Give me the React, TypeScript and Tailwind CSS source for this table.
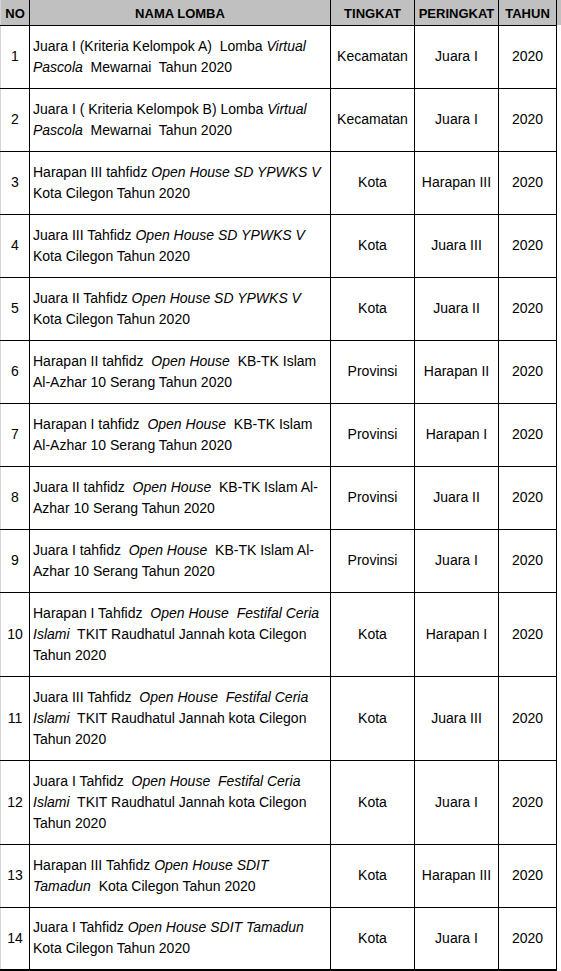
const rows: { no: number; nama: string[]; tingkat: string; peringkat: string }[] = [
  { no: 1, nama: ['Juara I (Kriteria Kelompok A)  Lomba _Virtual_', '_Pascola_  Mewarnai  Tahun 2020'], tingkat: 'Kecamatan', peringkat: 'Juara I' },
  { no: 2, nama: ['Juara I ( Kriteria Kelompok B) Lomba _Virtual_', '_Pascola_  Mewarnai  Tahun 2020'], tingkat: 'Kecamatan', peringkat: 'Juara I' },
  { no: 3, nama: ['Harapan III tahfidz _Open House SD YPWKS V_', 'Kota Cilegon Tahun 2020'], tingkat: 'Kota', peringkat: 'Harapan III' },
  { no: 4, nama: ['Juara III Tahfidz _Open House SD YPWKS V_', 'Kota Cilegon Tahun 2020'], tingkat: 'Kota', peringkat: 'Juara III' },
  { no: 5, nama: ['Juara II Tahfidz _Open House SD YPWKS V_', 'Kota Cilegon Tahun 2020'], tingkat: 'Kota', peringkat: 'Juara II' },
  { no: 6, nama: ['Harapan II tahfidz  _Open House_  KB-TK Islam', 'Al-Azhar 10 Serang Tahun 2020'], tingkat: 'Provinsi', peringkat: 'Harapan II' },
  { no: 7, nama: ['Harapan I tahfidz  _Open House_  KB-TK Islam', 'Al-Azhar 10 Serang Tahun 2020'], tingkat: 'Provinsi', peringkat: 'Harapan I' },
  { no: 8, nama: ['Juara II tahfidz  _Open House_  KB-TK Islam Al-', 'Azhar 10 Serang Tahun 2020'], tingkat: 'Provinsi', peringkat: 'Juara II' },
  { no: 9, nama: ['Juara I tahfidz  _Open House_  KB-TK Islam Al-', 'Azhar 10 Serang Tahun 2020'], tingkat: 'Provinsi', peringkat: 'Juara I' },
  { no: 10, nama: ['Harapan I Tahfidz  _Open House  Festifal Ceria_', '_Islami_  TKIT Raudhatul Jannah kota Cilegon', 'Tahun 2020'], tingkat: 'Kota', peringkat: 'Harapan I' },
  { no: 11, nama: ['Juara III Tahfidz  _Open House  Festifal Ceria_', '_Islami_  TKIT Raudhatul Jannah kota Cilegon', 'Tahun 2020'], tingkat: 'Kota', peringkat: 'Juara III' },
  { no: 12, nama: ['Juara I Tahfidz  _Open House  Festifal Ceria_', '_Islami_  TKIT Raudhatul Jannah kota Cilegon', 'Tahun 2020'], tingkat: 'Kota', peringkat: 'Juara I' },
  { no: 13, nama: ['Harapan III Tahfidz _Open House SDIT_', '_Tamadun_  Kota Cilegon Tahun 2020'], tingkat: 'Kota', peringkat: 'Harapan III' },
  { no: 14, nama: ['Juara I Tahfidz _Open House SDIT Tamadun_', 'Kota Cilegon Tahun 2020'], tingkat: 'Kota', peringkat: 'Juara I' },
]

// text between underscores is italic
function Line({ text }: { text: string }) {
  return (
    <div>
      {text.split('_').map((part, i) => (i % 2 === 1 ? <i key={i}>{part}</i> : <span key={i}>{part}</span>))}
    </div>
  )
}

const th = 'border border-black bg-[#c0c0c0] text-center align-bottom font-bold text-[13px] leading-[20px] pb-[1px]'
const td = 'border border-black text-center align-middle'

export default function App() {
  return (
    <div className="w-[561px] bg-white text-black" style={{ fontFamily: '"Liberation Sans", Arial, sans-serif' }}>
      <table className="table-fixed border-collapse w-[561px] text-[14px] leading-[21px]">
        <colgroup>
          <col className="w-[29px]" />
          <col className="w-[301px]" />
          <col className="w-[84px]" />
          <col className="w-[84px]" />
          <col className="w-[58px]" />
          <col />
        </colgroup>
        <thead>
          <tr className="h-[25px]">
            <th className={th + ' border-t-0 border-l-[#d4d4d4]'}>NO</th>
            <th className={th + ' border-t-0'}>NAMA LOMBA</th>
            <th className={th + ' border-t-0'}>TINGKAT</th>
            <th className={th + ' border-t-0'}>PERINGKAT</th>
            <th className={th + ' border-t-0'}>TAHUN</th>
            <th className="bg-[#c0c0c0] border-0"></th>
          </tr>
        </thead>
        <tbody>
          {rows.map((r, idx) => {
            const last = idx === rows.length - 1 ? ' border-b-2' : ''
            return (
              <tr key={r.no} className={r.nama.length === 3 ? 'h-[84px]' : 'h-[63px]'}>
                <td className={td + ' border-l-[#d4d4d4]' + last}>{r.no}</td>
                <td className={'border border-black align-middle text-left pl-[3px] whitespace-pre' + last}>
                  {r.nama.map((l, i) => <Line key={i} text={l} />)}
                </td>
                <td className={td + last}>{r.tingkat}</td>
                <td className={td + last}>{r.peringkat}</td>
                <td className={td + last}>2020</td>
                <td className="border-0"></td>
              </tr>
            )
          })}
        </tbody>
      </table>
    </div>
  )
}
